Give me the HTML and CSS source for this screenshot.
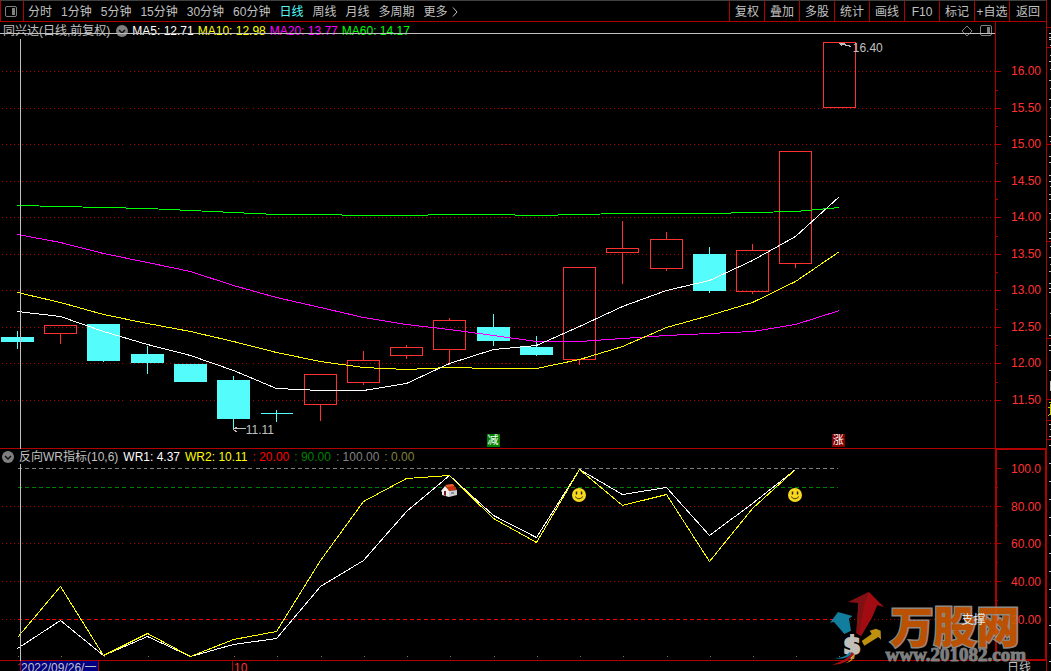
FILE: index.html
```html
<!DOCTYPE html>
<html lang="zh-CN">
<head>
<meta charset="utf-8">
<title>同兴达 日线</title>
<link rel="stylesheet" href="styles.css">
</head>
<body>
<div class="app">
  <header class="toolbar">
    <button class="pane-toggle" aria-label="侧栏">
      <svg width="12" height="11" viewBox="0 0 12 11"><rect x=".5" y=".5" width="11" height="10" rx="1.5" fill="none" stroke="#808080"/><rect x="7" y="2" width="3" height="7" fill="#808080"/></svg>
    </button>
    <nav class="periods">
      <button>分时</button><button>1分钟</button><button>5分钟</button><button>15分钟</button><button>30分钟</button><button>60分钟</button><button class="active">日线</button><button>周线</button><button>月线</button><button>多周期</button>
      <button class="more">更多<svg width="6" height="10" viewBox="0 0 6 10"><path d="M1 .5 5 5 1 9.500" fill="none" stroke="#c0c0c0"/></svg></button>
    </nav>
    <div class="tools">
      <button>复权</button><button>叠加</button><button>多股</button><button>统计</button><button>画线</button><button>F10</button><button>标记</button><button>+自选</button><button>返回</button>
    </div>
  </header>

  <main class="charts">
    <section class="plot price">
      <svg class="canvas" viewBox="0 22 995 427" preserveAspectRatio="none">
        <g transform="translate(.5 .5)" fill="none">
          <path class="grid" d="M1 71H995M1 108H995M1 144H995M1 181H995M1 217H995M1 254H995M1 290H995M1 327H995M1 363H995M1 400H995"/>
          <path class="up" d="M44 325h32v8h-32zM60 333V343M304 374h32v30h-32zM320 373v1M320 404V420M347 360h32v22h-32zM363 350V360M363 382v2M390 347h32v8h-32zM406 344v3M406 355v3M433 320h32v29h-32zM449 317v3M449 349V364M563 267h32v92h-32zM579 359v5M606 248h32v4h-32zM622 220V248M622 252V283M650 239h32v29h-32zM666 231v8M666 268v2M736 250h32v41h-32zM752 243v7M752 291v2M779 151h32v112h-32zM795 263v4M823 42h32v65h-32z"/>
          <path class="down-line" d="M17 330V348M103 323V361M147 345V373M233 375V429M276 409V421M260 413H292M493 313V345M536 335V355M709 246V292"/>
        </g>
        <path class="down" d="M1 337h33v5H1zM87 324h33v37H87zM131 354h33v9h-33zM174 364h33v18h-33zM217 380h33v39h-33zM477 327h33v14h-33zM520 347h33v8h-33zM693 254h33v37h-33z"/>
        <g transform="translate(.5 .5)" fill="none">
          <polyline class="ma60" points="17,205 60,206 103,207 147,208 190,210 233,212 276,214 320,214 363,215 406,215 449,214 493,214 536,215 579,214 622,213 666,213 709,213 752,212 795,211 839,207"/>
          <polyline class="ma20" points="17,234 60,242 103,253 147,262 190,271 233,285 276,297 320,307 363,317 406,324 449,329 493,335 536,341 579,341 622,338 666,335 709,333 752,331 795,324 839,310"/>
          <polyline class="ma10" points="17,292 60,302 103,314 147,323 190,331 233,341 276,352 320,361 363,367 406,369 449,367 493,368 536,368 579,359 622,346 666,327 709,315 752,302 795,281 839,251"/>
          <polyline class="ma5" points="17,311 60,316 103,331 147,344 190,355 233,370 276,388 320,390 363,390 406,383 449,363 493,349 536,345 579,326 622,306 666,290 709,280 752,260 795,236 839,196"/>
          <path class="cursor" d="M20 38V448"/>
          <path class="cursor" d="M233 428H245M233 429l4-3M233 429l4 3M839 43l12 3M839 43h5M839 43l3 3"/>
        </g>
      </svg>
      <div class="legend">
        <span class="name">同兴达(日线,前复权)</span>
        <button class="fold" aria-label="折叠"><svg width="12" height="12" viewBox="0 0 12 12"><circle cx="6" cy="6" r="6" fill="#808080"/><path d="M3 5l3 3 3-3" fill="none" stroke="#111" stroke-width="1.500"/></svg></button>
        <span class="white">MA5: 12.71</span><span class="yellow">MA10: 12.98</span><span class="magenta">MA20: 13.77</span><span class="green">MA60: 14.17</span>
        <span class="corner">
          <svg width="12" height="12" viewBox="0 0 12 12"><path d="M6 1l5 5-5 5-5-5z" fill="none" stroke="#808080"/></svg>
          <svg width="12" height="11" viewBox="0 0 12 11"><rect x=".5" y=".5" width="11" height="10" rx="1.500" fill="none" stroke="#808080"/><rect x="7" y="2" width="3" height="7" fill="#808080"/></svg>
        </span>
      </div>
      <span class="note high">16.40</span>
      <span class="note low">11.11</span>
      <span class="badge reduce">减</span>
      <span class="badge rise">涨</span>
    </section>

    <section class="axis price-axis">
      <svg class="canvas" viewBox="995 22 52 427" preserveAspectRatio="none">
        <path class="tick" d="M995 71.500h6M995 108.500h6M995 144.500h6M995 181.500h6M995 217.500h6M995 254.500h6M995 290.500h6M995 327.500h6M995 363.500h6M995 400.500h6M995 90.500h3M995 126.500h3M995 163.500h3M995 199.500h3M995 236.500h3M995 272.500h3M995 309.500h3M995 345.500h3M995 382.500h3"/>
      </svg>
      <ol class="scale"><li>16.00</li><li>15.50</li><li>15.00</li><li>14.50</li><li>14.00</li><li>13.50</li><li>13.00</li><li>12.50</li><li>12.00</li><li>11.50</li></ol>
    </section>

    <section class="plot indicator">
      <svg class="canvas" viewBox="0 449 995 212" preserveAspectRatio="none">
        <g transform="translate(.5 .5)" fill="none">
          <path class="grid" d="M1 506H995M1 543H995M1 581H995M1 619H17M837 619H995"/>
          <path class="level-100" d="M17 468H837"/>
          <path class="level-90" d="M17 487H837"/>
          <path class="level-20" d="M17 619H837"/>
          <path class="level-0" d="M17 656h1M60 656h1M103 656h1M147 656h1M190 656h1M233 656h1M276 656h1M320 656h1M363 656h1M406 656h1M449 656h1M493 656h1M536 656h1M579 656h1M622 656h1M666 656h1M709 656h1M752 656h1M795 656h1M838 656h1"/>
          <polyline class="ma5" points="17,648 60,620 103,655 147,636 190,656 233,644 276,638 320,586 363,560 406,511 449,475 493,515 536,537 579,469 622,494 666,487 709,535 752,503 795,469"/>
          <polyline class="ma10" points="17,637 60,586 103,655 147,633 190,656 233,639 276,631 320,560 363,501 406,478 449,475 493,518 536,542 579,469 622,505 666,494 709,561 752,508 795,469"/>
          <path class="cursor" d="M20 463V660"/>
        </g>
      </svg>
      <div class="legend">
        <button class="fold" aria-label="折叠"><svg width="12" height="12" viewBox="0 0 12 12"><circle cx="6" cy="6" r="6" fill="#808080"/><path d="M3 5l3 3 3-3" fill="none" stroke="#111" stroke-width="1.500"/></svg></button>
        <span class="title">反向WR指标(10,6)</span>
        <span class="white">WR1: 4.37</span><span class="yellow">WR2: 10.11</span><span class="red">: 20.00</span><span class="dark-green">: 90.00</span><span class="gray">: 100.00</span><span class="olive">: 0.00</span>
      </div>
      <svg class="mark house" viewBox="0 0 16 14"><path d="M0 7 4 2l4 4v7l-7-2V8z" fill="#eee"/><path d="M4 1l8-1 4 6-8 1z" fill="#c8320f"/><path d="M5 1l7-1 1 2-7 1z" fill="#e8622e"/><path d="M8 7l8-1v5l-8 2z" fill="#d0ccd0"/><path d="M3 7h2v5l-2-1z" fill="#702018"/><path d="M10 8h3v2h-3z" fill="#8890a8"/></svg>
      <svg class="mark smile-a" viewBox="0 0 14 14"><circle cx="7" cy="7" r="7" fill="#f8d820"/><path d="M4.500 3.500v3M9.500 3.500v3" stroke="#302800" stroke-width="1.500"/><path d="M3 8.500q4 4.500 8 0" fill="none" stroke="#504000"/></svg>
      <svg class="mark smile-b" viewBox="0 0 14 14"><circle cx="7" cy="7" r="7" fill="#f8d820"/><path d="M4.500 3.500v3M9.500 3.500v3" stroke="#302800" stroke-width="1.500"/><path d="M3 8.500q4 4.500 8 0" fill="none" stroke="#504000"/></svg>
    </section>

    <section class="axis indicator-axis">
      <svg class="canvas" viewBox="995 449 52 212" preserveAspectRatio="none">
        <path class="tick" d="M995 468.500h6M995 506.500h6M995 543.500h6M995 581.500h6M995 619.500h6M995 487.500h3M995 525.500h3M995 562.500h3M995 600.500h3M995 638.500h3"/>
      </svg>
      <ol class="scale"><li>100.0</li><li>80.00</li><li>60.00</li><li>40.00</li><li>20.00</li></ol>
    </section>

    <footer class="dates">
      <span class="day">1</span><time class="current">2022/09/26/一</time><span class="month">10</span>
    </footer>
    <div class="period-name">日线</div>
  </main>

  <aside class="edge">
    <svg class="canvas" viewBox="1047 0 4 671" preserveAspectRatio="none">
      <path d="M1047 27.500h4M1047 47.500h4M1047 144.500h4M1047 241.500h4M1047 338.500h4M1047 399.500h4M1047 420.500h4M1047 439.500h4" stroke="#b00000"/>
      <path d="M1049 33.500h2M1049 37.500h2M1049 39.500h2M1050 45.500h1M1050 55.500h1M1049 61.500h2M1050 69.500h1M1049 80.500h2M1050 88.500h1M1049 99.500h2M1050 107.500h1M1050 118.500h1M1049 136.500h2M1050 141.500h1M1049 156.500h2M1049 162.500h2M1049 175.500h2M1049 181.500h2M1050 186.500h1M1049 194.500h2M1049 199.500h2M1049 213.500h2M1050 219.500h1M1049 232.500h2M1049 238.500h2M1050 246.500h1M1049 257.500h2M1050 264.500h1M1049 271.500h2M1049 283.500h2M1049 288.500h2M1049 292.500h2M1050 313.500h1M1049 335.500h2M1049 345.500h2M1049 350.500h2M1049 370.500h2M1049 424.500h2M1050 429.500h1M1049 436.500h2M1049 445.500h2M1049 463.500h2M1049 481.500h2M1049 499.500h2M1049 517.500h2M1049 535.500h2M1049 553.500h2M1049 571.500h2M1049 589.500h2M1049 607.500h2M1049 625.500h2M1049 643.500h2M1049 661.500h2" stroke="#c0c0c0"/>
      <path d="M1050 381h1v10h-1z" fill="#c0c0c0"/>
      <path d="M1049 402.500h2M1048 407.500h3M1050 404v11M1048 416l2-2" stroke="#c8c800"/>
    </svg>
  </aside>

  <div class="watermark">
    <svg width="57" height="77" viewBox="90 60 171 231">
      <path d="M210 66l45 45-20-5-17 39-32 54-14-10 6-91-30-2z" fill="#b30d14"/>
      <path d="M210 66l-62 30 30 2-6 91 8 5 16-92z" fill="#8f1218"/>
      <path d="M117 126l43 12-10 8 6 36-20 10-31-36-12 2z" fill="#128cad"/>
      <path d="M231 176l14 6 1 27-8-8-42 26-8-14 30-21-6-10z" fill="#d3a012"/>
      <text x="133" y="252" class="dollar">$</text>
      <path d="M158 246q-8 22-58 38 40 2 66-32z" fill="#c01018"/>
      <path d="M152 246q-12 18-46 18 36 8 52-14z" fill="#1690b0"/>
      <path d="M162 256q-4 16-24 24 24-4 30-24z" fill="#d8a818"/>
    </svg>
    <div class="brand"><strong>万股网</strong><span>www.201082.com</span></div>
    <em>支撑</em>
  </div>
</div>
</body>
</html>
```
FILE: styles.css
```css
* { box-sizing: border-box; }

body {
  margin: 0;
  background: #000;
  color: #c0c0c0;
  font: 12px/14px "Liberation Sans", "Noto Sans CJK SC", sans-serif;
}

button {
  padding: 0;
  border: 0;
  background: none;
  color: inherit;
  font: inherit;
  white-space: nowrap;
  cursor: pointer;
}

.app {
  position: relative;
  display: grid;
  grid-template: 22px 1fr / 1fr 4px;
  height: 100vh;
  overflow: hidden;
}

/* toolbar */
.toolbar {
  display: flex;
  border-top: 1px solid #404040;
  border-right: 1px solid #b00000;
  border-bottom: 1px solid #b00000;
}

.pane-toggle {
  display: flex;
  align-items: center;
  width: 24px;
  padding-left: 4px;
  border: solid #b00000;
  border-width: 0 1px;
}

.periods {
  display: flex;
  flex: 1;
  gap: 9px;
  padding: 2px 0 0 4px;
}

.periods .active { color: #54fcfc; }

.more {
  display: flex;
  align-items: center;
  gap: 4px;
}

.tools { display: flex; }

.tools button {
  width: 35px;
  padding-top: 2px;
  border-left: 1px solid #b00000;
}

.tools button:last-child { width: 37px; }

/* chart grid */
.charts {
  display: grid;
  grid-template: 427fr 212fr 10px / 1fr 52px;
  min-height: 0;
}

.edge {
  grid-area: 1 / 2 / 3 / 3;
  position: relative;
}

.plot, .axis {
  position: relative;
  min-height: 0;
}

.plot { border-bottom: 1px solid #b00000; }

.canvas {
  position: absolute;
  inset: 0;
  width: 100%;
  height: calc(100% + 1px);
  shape-rendering: crispEdges;
}

.axis .canvas, .edge .canvas { height: 100%; fill: none; }

.axis {
  border: solid #b00000;
  border-width: 0 1px 1px;
}

.axis .canvas {
  left: -1px;
  width: calc(100% + 2px);
  height: calc(100% + 1px);
}

.indicator-axis { border-width: 1px 2px 2px; }

.indicator-axis .canvas {
  top: -1px;
  left: -2px;
  width: calc(100% + 4px);
  height: calc(100% + 3px);
}

.grid { stroke: #b00000; stroke-dasharray: 1 3; }
.up { stroke: #ff3232; }
.down-line { stroke: #54fcfc; }
.down { fill: #54fcfc; }
.ma5 { stroke: #fff; }
.ma10 { stroke: #ff0; }
.ma20 { stroke: #f0f; }
.ma60 { stroke: #0f0; }
.cursor { stroke: #c0c0c0; }
.tick { stroke: #b00000; }
.level-100 { stroke: #808080; stroke-dasharray: 4 3; }
.level-90 { stroke: #008000; stroke-dasharray: 4 3; }
.level-20 { stroke: #f00; stroke-dasharray: 4 3; }
.level-0 { stroke: #808040; }

/* legends */
.legend {
  position: relative;
  display: flex;
  align-items: center;
  height: 17px;
  white-space: nowrap;
}

.price .legend {
  gap: 4px;
  padding-left: 3px;
}

.indicator .legend {
  gap: 5px;
  height: 16px;
  padding-left: 2px;
}

.legend svg { display: block; }
.name { margin-right: 2px; }

.price .legend::after {
  content: "";
  position: absolute;
  left: 0;
  right: 0;
  top: 11px;
  height: 1px;
  background: #c0c0c0;
}

.corner {
  display: flex;
  align-items: center;
  gap: 7px;
  margin-left: auto;
  padding-right: 3px;
}

.white { color: #fff; }
.yellow { color: #ff0; }
.magenta { color: #f0f; }
.green { color: #0f0; }
.red { color: #f00; }
.dark-green { color: #008000; }
.gray { color: #808080; }
.olive { color: #808040; }

/* marks over the plots */
.note, .badge, .mark { position: absolute; }
.high { left: 85.7%; top: 4.400%; }
.low { left: 24.7%; top: 94.2%; }

.badge {
  top: 96.6%;
  width: 13px;
  height: 13px;
  color: #fff;
  font-size: 11px;
  line-height: 13px;
  text-align: center;
}

.reduce { left: 48.9%; background: #008000; }
.rise { left: 83.6%; background: #800000; }
.mark { width: 14px; height: 14px; }
.house { left: 44.300%; top: 16.500%; width: 16px; }
.smile-a { left: 57.500%; top: 18.400%; }
.smile-b { left: 79.200%; top: 18.400%; }

/* value scales */
.scale {
  position: relative;
  display: flex;
  flex-direction: column;
  height: 100%;
  margin: 0;
  padding: 31px 5px 30px 0;
  list-style: none;
  color: #ff3232;
}

.indicator-axis .scale { padding: 0 4px 20px 0; }

.scale li {
  display: flex;
  flex: 1;
  align-items: center;
  justify-content: flex-end;
}

/* date strip */
.dates {
  display: flex;
  height: 10px;
  overflow: hidden;
  color: #ff3232;
}

.day {
  width: 21px;
  padding-left: 17px;
  border-right: 1px solid #b00000;
  overflow: hidden;
}

.current {
  width: 78px;
  border-right: 1px solid #b00000;
  background: #000080;
  color: #c0c0c0;
  white-space: nowrap;
}

.month {
  margin-left: 133px;
  padding-left: 1px;
  border-left: 1px solid #b00000;
}

.period-name {
  height: 10px;
  padding-left: 12px;
  overflow: hidden;
  border-right: 1px solid #b00000;
}

/* watermark */
.watermark {
  position: absolute;
  right: 25px;
  bottom: 4px;
  display: flex;
  opacity: .9;
}

.dollar {
  font: bold 76px "DejaVu Sans", sans-serif;
  fill: #d8d4cc;
  stroke: #d8d4cc;
  stroke-width: 6px;
}

.brand {
  display: flex;
  flex-direction: column;
  padding-top: 12px;
}

.brand strong {
  padding-left: 5px;
  color: #d05a04;
  font: 900 43px/44px "Noto Sans CJK SC", sans-serif;
  -webkit-text-stroke: 3px #a09890;
  paint-order: stroke fill;
}

.brand span {
  color: #8c8c8c;
  font: bold 19px/18px "Liberation Serif", serif;
  -webkit-text-stroke: 1px #8c8c8c;
}

.watermark em {
  position: absolute;
  left: 133px;
  top: 23px;
  color: #fff;
  font-style: normal;
}
```
